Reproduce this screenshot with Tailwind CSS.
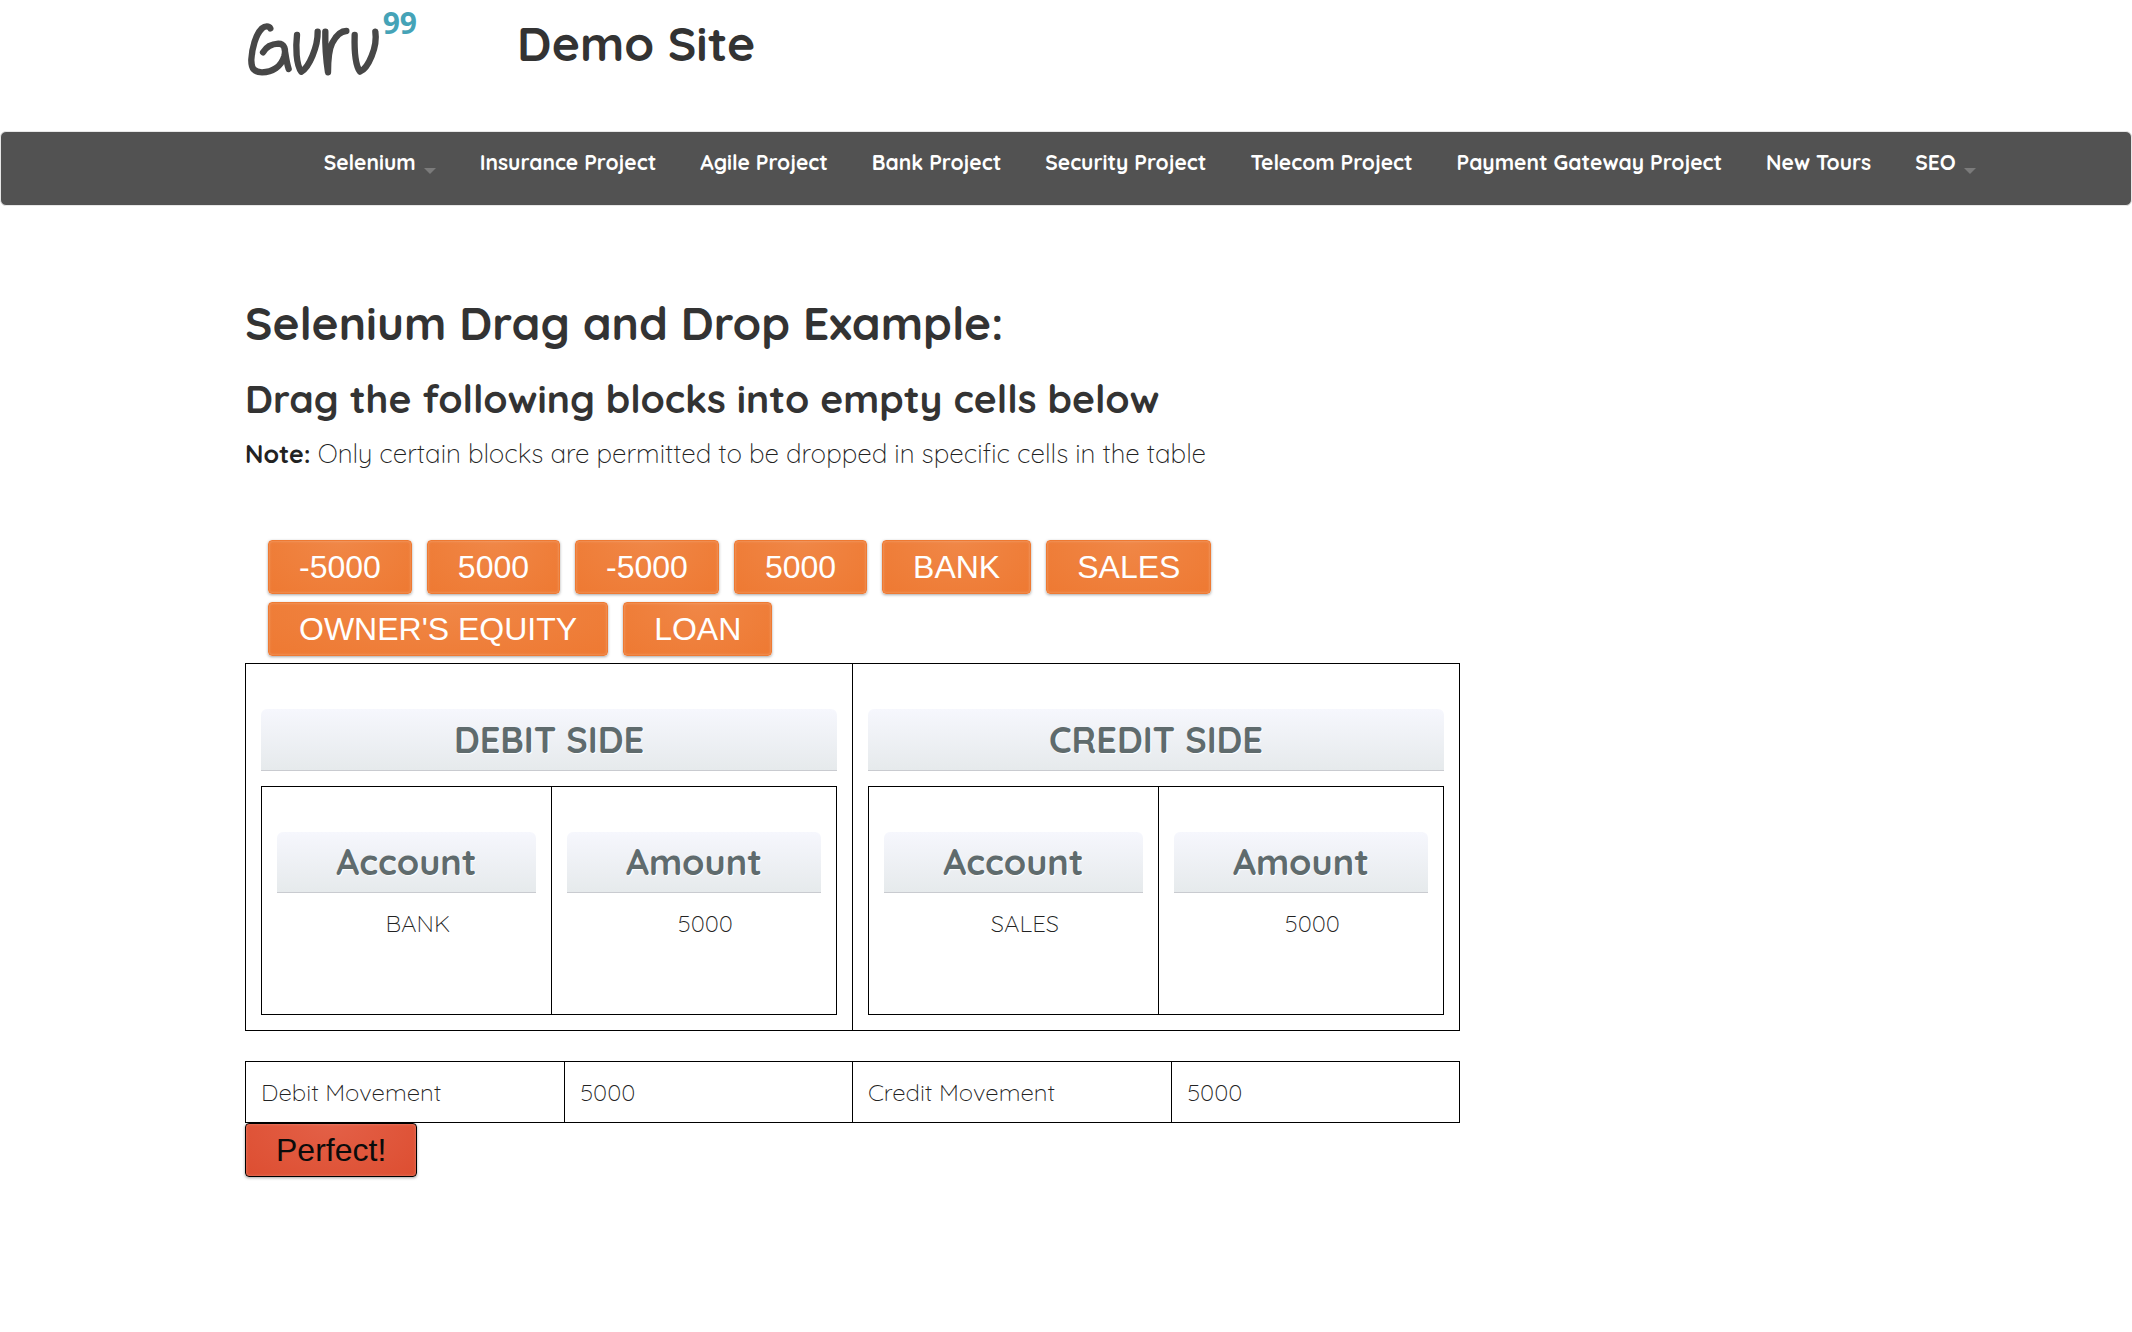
<!DOCTYPE html>
<html lang="en">
<head>
<meta charset="utf-8">
<meta name="viewport" content="width=device-width, initial-scale=1">
<title>Guru99 Demo Site</title>
<script src="https://cdn.jsdelivr.net/npm/@tailwindcss/browser@4"></script>
</head>
<body class="min-h-screen bg-white font-['Quicksand','Open_Sans',sans-serif] text-2xl font-light text-[#222]">

<header class="mx-auto flex h-[131px] max-w-[1642px] items-start gap-[87px]">
  <a href="#" aria-label="Guru99">
    <svg class="h-[85px] w-[185px]" viewBox="15 0 555 255" fill="none" stroke="#474747" stroke-width="19" stroke-linecap="round" stroke-linejoin="round">
      <path d="M91 85C87 77 75 77 66 85C47 103 36 145 34 178C33 207 44 217 66 217C97 217 124 200 133 168C138 148 134 131 115 131C96 132 78 142 69 157M133 142C137 165 140 190 146 207"/>
      <path d="M171 105C167 140 168 195 184 215C207 202 234 140 233 95"/>
      <path d="M256 95C255 140 259 185 264 217C264 180 266 150 277 128C288 108 300 93 319 93"/>
      <path d="M344 105C343 140 345 195 360 215C385 205 413 140 406 95"/>
      <text x="428" y="102" font-size="90" font-weight="700" fill="#45a3b7" stroke="none" font-family="Open Sans, sans-serif">99</text>
    </svg>
  </a>
  <div class="pt-[11px] text-5xl leading-[64px] font-bold text-[#333]">Demo Site</div>
</header>

<nav class="rounded-md border border-[#e7e7e7] bg-[#525252]">
  <ul class="flex h-[73px] gap-11 pt-[14px] pl-[15.15%] text-[21px] leading-8 font-bold whitespace-nowrap text-white">
    <li><a href="#" class="flex gap-2">Selenium <svg class="mt-[22px] h-[6px] w-3" viewBox="0 0 12 6" fill="#7b7b7b"><path d="M0 0H12L6 6Z"/></svg></a></li>
    <li><a href="#">Insurance Project</a></li>
    <li><a href="#">Agile Project</a></li>
    <li><a href="#">Bank Project</a></li>
    <li><a href="#">Security Project</a></li>
    <li><a href="#">Telecom Project</a></li>
    <li><a href="#">Payment Gateway Project</a></li>
    <li><a href="#">New Tours</a></li>
    <li><a href="#" class="flex gap-2">SEO <svg class="mt-[22px] h-[6px] w-3" viewBox="0 0 12 6" fill="#7b7b7b"><path d="M0 0H12L6 6Z"/></svg></a></li>
  </ul>
</nav>

<main class="mx-auto max-w-[1642px] pt-[85px] pb-20">
  <h1 class="text-[46px] leading-[64px] font-bold text-[#333]">Selenium Drag and Drop Example:</h1>
  <h2 class="mt-4 text-[39px] leading-[56px] font-bold text-[#333]">Drag the following blocks into empty cells below</h2>
  <p class="mt-[9px] text-[26px] leading-9"><b class="text-[25px] leading-9 font-bold">Note:</b> Only certain blocks are permitted to be dropped in specific cells in the table</p>

  <section class="mt-[68px] max-w-[1215px]">
    <div class="flex flex-wrap gap-x-[15px] gap-y-2 pl-[23px] font-['Liberation_Sans',Arial,sans-serif] text-[32px] leading-[52px] font-normal text-white [text-shadow:0_-1px_1px_rgba(0,0,0,0.5)]">
      <button type="button" class="rounded-sm border border-[#ee7a33] bg-radial-[at_50%_0%] from-[#f08747] to-[#ee7932] px-[30px] shadow-[inset_0_0_3px_rgba(255,255,255,0.3),0_1px_3px_rgba(0,0,0,0.35)]">-5000</button>
      <button type="button" class="rounded-sm border border-[#ee7a33] bg-radial-[at_50%_0%] from-[#f08747] to-[#ee7932] px-[30px] shadow-[inset_0_0_3px_rgba(255,255,255,0.3),0_1px_3px_rgba(0,0,0,0.35)]">5000</button>
      <button type="button" class="rounded-sm border border-[#ee7a33] bg-radial-[at_50%_0%] from-[#f08747] to-[#ee7932] px-[30px] shadow-[inset_0_0_3px_rgba(255,255,255,0.3),0_1px_3px_rgba(0,0,0,0.35)]">-5000</button>
      <button type="button" class="rounded-sm border border-[#ee7a33] bg-radial-[at_50%_0%] from-[#f08747] to-[#ee7932] px-[30px] shadow-[inset_0_0_3px_rgba(255,255,255,0.3),0_1px_3px_rgba(0,0,0,0.35)]">5000</button>
      <button type="button" class="rounded-sm border border-[#ee7a33] bg-radial-[at_50%_0%] from-[#f08747] to-[#ee7932] px-[30px] shadow-[inset_0_0_3px_rgba(255,255,255,0.3),0_1px_3px_rgba(0,0,0,0.35)]">BANK</button>
      <button type="button" class="rounded-sm border border-[#ee7a33] bg-radial-[at_50%_0%] from-[#f08747] to-[#ee7932] px-[30px] shadow-[inset_0_0_3px_rgba(255,255,255,0.3),0_1px_3px_rgba(0,0,0,0.35)]">SALES</button>
      <button type="button" class="rounded-sm border border-[#ee7a33] bg-radial-[at_50%_0%] from-[#f08747] to-[#ee7932] px-[30px] shadow-[inset_0_0_3px_rgba(255,255,255,0.3),0_1px_3px_rgba(0,0,0,0.35)]">OWNER'S EQUITY</button>
      <button type="button" class="rounded-sm border border-[#ee7a33] bg-radial-[at_50%_0%] from-[#f08747] to-[#ee7932] px-[30px] shadow-[inset_0_0_3px_rgba(255,255,255,0.3),0_1px_3px_rgba(0,0,0,0.35)]">LOAN</button>
    </div>

    <table class="mt-[7px] w-full table-fixed border-collapse border border-black">
      <tr>
        <td class="border border-black px-[15px] pt-[45px] pb-[15px] align-top">
          <h3 class="rounded-t-md border-b border-[#c9cbd0] bg-linear-to-b from-[#f6f7fd] to-[#e6eaec] text-center text-4xl leading-[61px] font-bold text-[#5f6b6d] [text-shadow:1px_1px_1px_#fff]">DEBIT SIDE</h3>
          <table class="mt-[15px] w-full table-fixed border-collapse border border-black">
            <tr>
              <td class="h-[228px] w-[50.4%] border border-black px-[15px] pt-[45px] align-top">
                <h4 class="rounded-t-md border-b border-[#c9cbd0] bg-linear-to-b from-[#f6f7fd] to-[#e6eaec] text-center text-4xl leading-[60px] font-bold text-[#5f6b6d] [text-shadow:1px_1px_1px_#fff]">Account</h4>
                <ul class="mt-3 pl-[23px] text-center leading-9"><li>BANK</li></ul>
              </td>
              <td class="border border-black px-[15px] pt-[45px] align-top">
                <h4 class="rounded-t-md border-b border-[#c9cbd0] bg-linear-to-b from-[#f6f7fd] to-[#e6eaec] text-center text-4xl leading-[60px] font-bold text-[#5f6b6d] [text-shadow:1px_1px_1px_#fff]">Amount</h4>
                <ul class="mt-3 pl-[23px] text-center leading-9"><li>5000</li></ul>
              </td>
            </tr>
          </table>
        </td>
        <td class="border border-black px-[15px] pt-[45px] pb-[15px] align-top">
          <h3 class="rounded-t-md border-b border-[#c9cbd0] bg-linear-to-b from-[#f6f7fd] to-[#e6eaec] text-center text-4xl leading-[61px] font-bold text-[#5f6b6d] [text-shadow:1px_1px_1px_#fff]">CREDIT SIDE</h3>
          <table class="mt-[15px] w-full table-fixed border-collapse border border-black">
            <tr>
              <td class="h-[228px] w-[50.4%] border border-black px-[15px] pt-[45px] align-top">
                <h4 class="rounded-t-md border-b border-[#c9cbd0] bg-linear-to-b from-[#f6f7fd] to-[#e6eaec] text-center text-4xl leading-[60px] font-bold text-[#5f6b6d] [text-shadow:1px_1px_1px_#fff]">Account</h4>
                <ul class="mt-3 pl-[23px] text-center leading-9"><li>SALES</li></ul>
              </td>
              <td class="border border-black px-[15px] pt-[45px] align-top">
                <h4 class="rounded-t-md border-b border-[#c9cbd0] bg-linear-to-b from-[#f6f7fd] to-[#e6eaec] text-center text-4xl leading-[60px] font-bold text-[#5f6b6d] [text-shadow:1px_1px_1px_#fff]">Amount</h4>
                <ul class="mt-3 pl-[23px] text-center leading-9"><li>5000</li></ul>
              </td>
            </tr>
          </table>
        </td>
      </tr>
    </table>

    <table class="mt-[30px] w-full table-fixed border-collapse border border-black">
      <tr class="h-[61px]">
        <td class="w-[26.3%] border border-black px-[15px]">Debit Movement</td>
        <td class="w-[23.7%] border border-black px-[15px]">5000</td>
        <td class="w-[26.3%] border border-black px-[15px]">Credit Movement</td>
        <td class="w-[23.7%] border border-black px-[15px]">5000</td>
      </tr>
    </table>
    <button type="button" class="block rounded-sm border border-black bg-radial-[at_50%_0%] from-[#e36047] to-[#dd4e31] px-[30px] font-['Liberation_Sans',Arial,sans-serif] text-[32px] leading-[52px] font-normal text-[#0b0b0b] shadow-[inset_0_0_3px_rgba(255,255,255,0.3),0_1px_3px_rgba(0,0,0,0.35)]">Perfect!</button>
  </section>
</main>
</body>
</html>
